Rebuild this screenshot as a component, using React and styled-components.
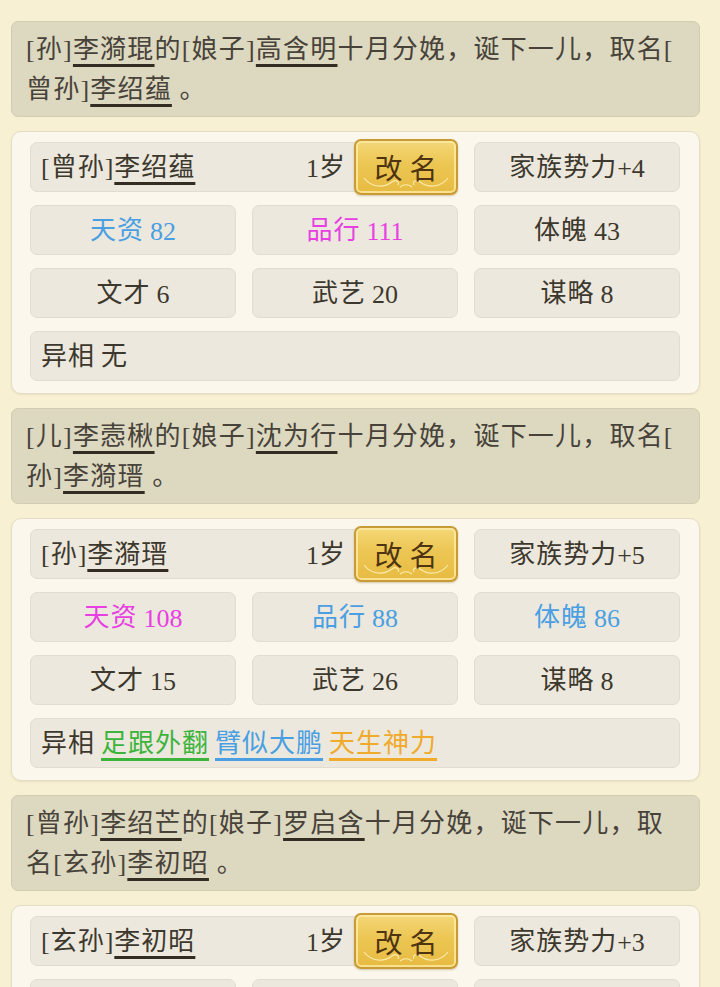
import React from 'react';
import styled, { createGlobalStyle } from 'styled-components';

const GlobalStyle = createGlobalStyle`
  html, body {
    margin: 0;
    padding: 0;
    background: #f7f0d3;
  }
  body {
    font-family: 'Liberation Serif', 'Noto Sans CJK SC', serif;
    color: #3d382d;
  }
`;

const Page = styled.div`
  display: flex;
  flex-direction: column;
  gap: 14px;
  padding: 21px 20px 0 11px;
  height: 987px;
  overflow: hidden;
  box-sizing: border-box;
`;

const Message = styled.div`
  background: #ddd8c0;
  border: 1px solid #d2ccb1;
  border-radius: 7px;
  padding: 8px 12px 6px 14px;
  font-size: 26px;
  line-height: 40px;
  letter-spacing: 1.2px;
  color: #48433a;
  line-break: anywhere;
  word-break: break-all;
`;

const Name = styled.span`
  text-decoration: underline;
  text-decoration-thickness: 3px;
  text-underline-offset: 6px;
  text-decoration-color: ${(p) => p.$line || '#322c22'};
  color: ${(p) => p.$color || 'inherit'};
`;

const Card = styled.div`
  background: #fbf7ec;
  border: 1px solid #e4dcc4;
  border-radius: 10px;
  padding: 10px 19px 12px 18px;
  display: grid;
  grid-template-columns: repeat(3, 1fr);
  column-gap: 16px;
  row-gap: 13px;
  box-shadow: 0 1px 2px rgba(160, 140, 90, 0.15);
`;

const Cell = styled.div`
  height: 50px;
  box-sizing: border-box;
  background: #ece8de;
  border: 1px solid #e2ddd0;
  border-radius: 7px;
  display: flex;
  align-items: center;
  justify-content: ${(p) => (p.$left ? 'flex-start' : 'center')};
  padding: 0 ${(p) => (p.$left ? '10px' : '0')};
  font-size: 26px;
  letter-spacing: 1px;
  color: ${(p) => p.$color || '#3d382d'};
  grid-column: ${(p) => p.$span || 'auto'};
  white-space: nowrap;
`;

const NameCell = styled(Cell)`
  padding-right: 0;
`;

const Line = styled.span`
  line-height: 34px;
  padding-top: 2px;
`;

const Num = styled.span`
  vertical-align: -1px;
  letter-spacing: 0;
`;

const Age = styled(Line)`
  margin-left: auto;
  margin-right: 9px;
  letter-spacing: 0;
`;

const RenameButton = styled.button`
  position: relative;
  margin: -3px -1px -3px 0;
  height: 56px;
  width: 104px;
  border: 2px solid #c89b36;
  border-radius: 7px;
  background: linear-gradient(180deg, #f4d778 0%, #ecc653 45%, #e7bb42 100%);
  box-shadow: inset 0 0 0 2px rgba(255, 238, 170, 0.75), 0 1px 2px rgba(120, 90, 20, 0.3);
  font-family: 'Liberation Serif', 'Noto Sans CJK SC', serif;
  font-size: 28px;
  letter-spacing: 7px;
  padding: 0 0 0 7px;
  color: #4e3410;
  cursor: pointer;
  overflow: hidden;
  svg {
    position: absolute;
    left: 6px;
    bottom: 3px;
  }
  span {
    position: relative;
  }
`;

const Gap = styled.span`
  display: inline-block;
  width: 6px;
`;

const people = [
  {
    message: [['[孙]'], ['李漪琨', true], ['的[娘子]'], ['高含明', true], ['十月分娩，诞下一儿，取名[曾孙]'], ['李绍蕴', true], [' 。']],
    title: '[曾孙]',
    name: '李绍蕴',
    power: 4,
    stats: [
      ['天资', 82, '#4a9fe2'],
      ['品行', 111, '#e83fe2'],
      ['体魄', 43],
      ['文才', 6],
      ['武艺', 20],
      ['谋略', 8],
    ],
    traits: [],
  },
  {
    message: [['[儿]'], ['李悫楸', true], ['的[娘子]'], ['沈为行', true], ['十月分娩，诞下一儿，取名[孙]'], ['李漪瑨', true], [' 。']],
    title: '[孙]',
    name: '李漪瑨',
    power: 5,
    stats: [
      ['天资', 108, '#e83fe2'],
      ['品行', 88, '#4a9fe2'],
      ['体魄', 86, '#4a9fe2'],
      ['文才', 15],
      ['武艺', 26],
      ['谋略', 8],
    ],
    traits: [
      ['足跟外翻', '#3cb43c'],
      ['臂似大鹏', '#4a9fe2'],
      ['天生神力', '#f0aa2c'],
    ],
  },
  {
    message: [['[曾孙]'], ['李绍芒', true], ['的[娘子]'], ['罗启含', true], ['十月分娩，诞下一儿，取名[玄孙]'], ['李初昭', true], [' 。']],
    title: '[玄孙]',
    name: '李初昭',
    power: 3,
    stats: [
      ['天资', 47],
      ['品行', 63],
      ['体魄', 52],
      ['文才', 9],
      ['武艺', 11],
      ['谋略', 5],
    ],
    traits: [],
  },
];

function Flourish() {
  return (
    <svg width="88" height="16" viewBox="0 0 88 16" fill="none" stroke="rgba(255,246,200,0.8)" strokeWidth="1.2">
      <path d="M2 4 C10 14, 22 14, 30 8 C34 5, 38 8, 36 11" />
      <path d="M86 4 C78 14, 66 14, 58 8 C54 5, 50 8, 52 11" />
      <path d="M38 13 C42 10, 46 10, 50 13" />
    </svg>
  );
}

function Stat({ label, value, color }) {
  return (
    <Cell $color={color}>
      <Line>
        {label}
        <Gap />
        <Num>{value}</Num>
      </Line>
    </Cell>
  );
}

function Person({ person }) {
  return (
    <>
      <Message>
        {person.message.map(([text, underline], i) =>
          underline ? <Name key={i}>{text}</Name> : <span key={i}>{text}</span>
        )}
      </Message>
      <Card>
        <NameCell $left $span="span 2">
          <Line>
            {person.title}
            <Name>{person.name}</Name>
          </Line>
          <Age>
            <Num>1</Num>岁
          </Age>
          <RenameButton>
            <Flourish />
            <span>改名</span>
          </RenameButton>
        </NameCell>
        <Cell>
          <Line>
            家族势力<Num>+{person.power}</Num>
          </Line>
        </Cell>
        {person.stats.map(([label, value, color]) => (
          <Stat key={label} label={label} value={value} color={color} />
        ))}
        <Cell $left $span="span 3">
          <Line>
            异相<Gap />
            {person.traits.length === 0
              ? '无'
              : person.traits.map(([t, c], i) => (
                  <React.Fragment key={t}>
                    {i > 0 && <Gap />}
                    <Name $color={c} $line={c}>{t}</Name>
                  </React.Fragment>
                ))}
          </Line>
        </Cell>
      </Card>
    </>
  );
}

export default function App() {
  return (
    <>
      <GlobalStyle />
      <Page>
        {people.map((p) => (
          <Person key={p.name} person={p} />
        ))}
      </Page>
    </>
  );
}
